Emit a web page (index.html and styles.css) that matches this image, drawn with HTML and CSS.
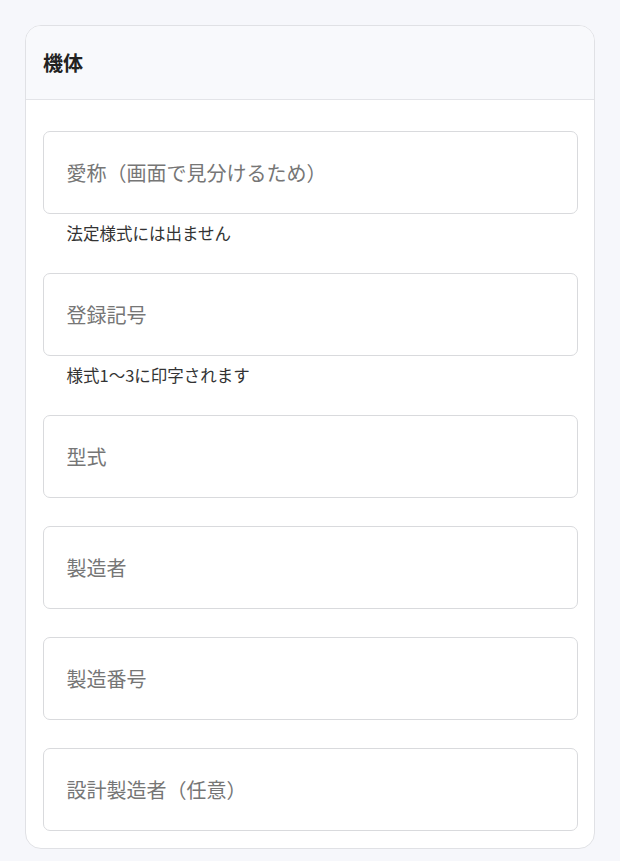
FILE: index.html
```html
<!DOCTYPE html>
<html lang="ja">
<head>
<meta charset="utf-8">
<title>機体</title>
<link rel="stylesheet" href="styles.css">
</head>
<body>
<section class="card">
  <header class="card-header">機体</header>
  <div class="card-body">
    <div class="field">
      <input class="input" type="text" placeholder="愛称（画面で見分けるため）">
      <p class="help">法定様式には出ません</p>
    </div>
    <div class="field">
      <input class="input" type="text" placeholder="登録記号">
      <p class="help">様式1〜3に印字されます</p>
    </div>
    <div class="field">
      <input class="input" type="text" placeholder="型式">
    </div>
    <div class="field">
      <input class="input" type="text" placeholder="製造者">
    </div>
    <div class="field">
      <input class="input" type="text" placeholder="製造番号">
    </div>
    <div class="field">
      <input class="input" type="text" placeholder="設計製造者（任意）">
    </div>
  </div>
</section>
</body>
</html>
```

FILE: styles.css
```css
html, body {
  margin: 0;
  padding: 0;
  background: #f6f7fb;
}

body {
  font-family: "Noto Sans CJK JP", "Noto Sans", sans-serif;
  color: #222;
  padding: 25px 25px 0 25px;
}

.card {
  width: 570px;
  box-sizing: border-box;
  background: #ffffff;
  border: 1.5px solid #e0e1e5;
  border-radius: 16px;
  overflow: hidden;
}

.card-header {
  height: 73.5px;
  box-sizing: border-box;
  display: flex;
  align-items: center;
  padding: 0 17px;
  background: #f8f9fc;
  border-bottom: 1.5px solid #e3e4e8;
  font-size: 20px;
  font-weight: 700;
  color: #222;
}

.card-body {
  display: flex;
  flex-direction: column;
  gap: 28px;
  padding: 31.5px 16.5px 17px;
}

.field {
  display: flex;
  flex-direction: column;
}

.input {
  display: block;
  width: 100%;
  height: 83px;
  box-sizing: border-box;
  margin: 0;
  padding: 0 23px;
  border: 1.5px solid #d9dadd;
  border-radius: 7px;
  background: #ffffff;
  font-family: "Noto Sans CJK JP", "Noto Sans", sans-serif;
  font-size: 20px;
  color: #222;
  outline: none;
}

.input::placeholder {
  color: #767676;
  opacity: 1;
}

.help {
  margin: 8px 0 0 24px;
  font-size: 16.5px;
  line-height: 23px;
  color: #333;
}
```
